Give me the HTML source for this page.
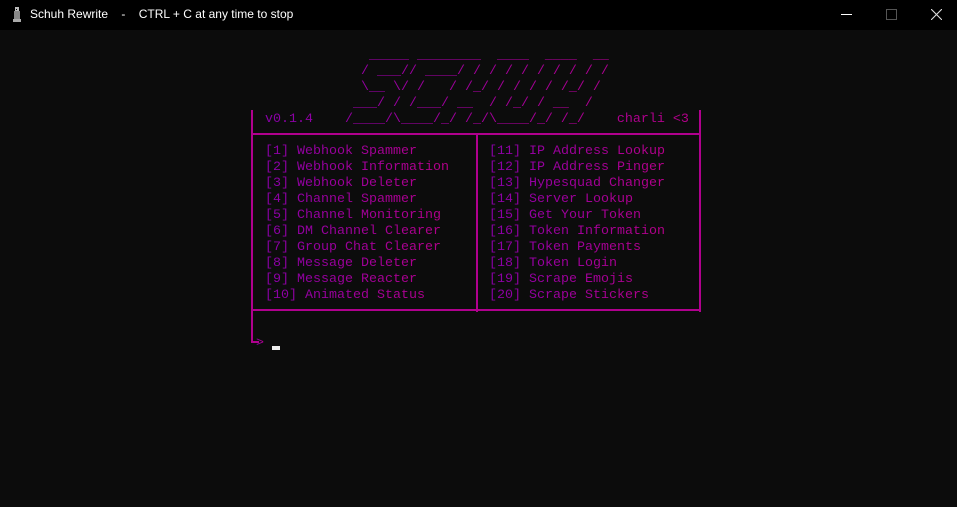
<!DOCTYPE html>
<html><head><meta charset="utf-8"><style>
html,body{margin:0;padding:0;}
body{width:957px;height:507px;background:#0c0c0c;position:relative;overflow:hidden;font-family:"Liberation Mono",monospace;}
.tb{position:absolute;left:0;top:0;width:957px;height:30px;background:#000;}
.tt{position:absolute;left:30px;top:7px;font:12px "Liberation Sans",sans-serif;color:#fff;white-space:pre;}
.ln{position:absolute;font-size:13.33px;line-height:16px;white-space:pre;
 background:linear-gradient(90deg,#8a00a8,#b4008a);-webkit-background-clip:text;background-clip:text;color:transparent;}
.v{position:absolute;width:2px;background:#b0008e;}
.h{position:absolute;height:2px;background:#b0008e;}
</style></head><body>
<div class="tb">
 <svg style="position:absolute;left:12px;top:7px" width="10" height="16" viewBox="0 0 10 16"><rect x="3" y="0" width="4" height="4" fill="#bbb"/><rect x="2" y="4" width="6" height="8" fill="#888"/><rect x="1" y="12" width="8" height="3" fill="#aaa"/><rect x="4" y="2" width="1" height="1" fill="#000"/></svg>
 <div class="tt">Schuh Rewrite    -    CTRL + C at any time to stop</div>
 <div style="position:absolute;left:841px;top:14px;width:11px;height:1px;background:#fff"></div>
 <div style="position:absolute;left:886px;top:9px;width:9px;height:9px;border:1px solid #555"></div>
 <svg style="position:absolute;left:931px;top:9px" width="11" height="11"><path d="M0 0L11 11M11 0L0 11" stroke="#ddd" stroke-width="1.1"/></svg>
</div>

<div class="ln" style="left:265px;top:48px">             _____ ________  ____  ____  __
            / ___// ____/ / / / / / / / / /
            \__ \/ /   / /_/ / / / / /_/ /
           ___/ / /___/ __  / /_/ / __  /
v0.1.4    /____/\____/_/ /_/\____/_/ /_/    charli &lt;3</div>

<div class="v" style="left:251px;top:110px;height:233px"></div>
<div class="v" style="left:476px;top:134px;height:178px"></div>
<div class="v" style="left:699px;top:110px;height:202px"></div>
<div class="h" style="left:251px;top:133px;width:450px"></div>
<div class="h" style="left:251px;top:309px;width:450px"></div>
<div class="h" style="left:251px;top:341px;width:8px"></div>
<div class="ln" style="left:256px;top:336px">&gt;</div>
<div style="position:absolute;left:272px;top:346px;width:8px;height:4px;background:#eee"></div>

<div class="ln" style="left:265px;top:144px">[1] Webhook Spammer
[2] Webhook Information
[3] Webhook Deleter
[4] Channel Spammer
[5] Channel Monitoring
[6] DM Channel Clearer
[7] Group Chat Clearer
[8] Message Deleter
[9] Message Reacter
[10] Animated Status</div>
<div class="ln" style="left:489px;top:144px">[11] IP Address Lookup
[12] IP Address Pinger
[13] Hypesquad Changer
[14] Server Lookup
[15] Get Your Token
[16] Token Information
[17] Token Payments
[18] Token Login
[19] Scrape Emojis
[20] Scrape Stickers</div>
</body></html>
